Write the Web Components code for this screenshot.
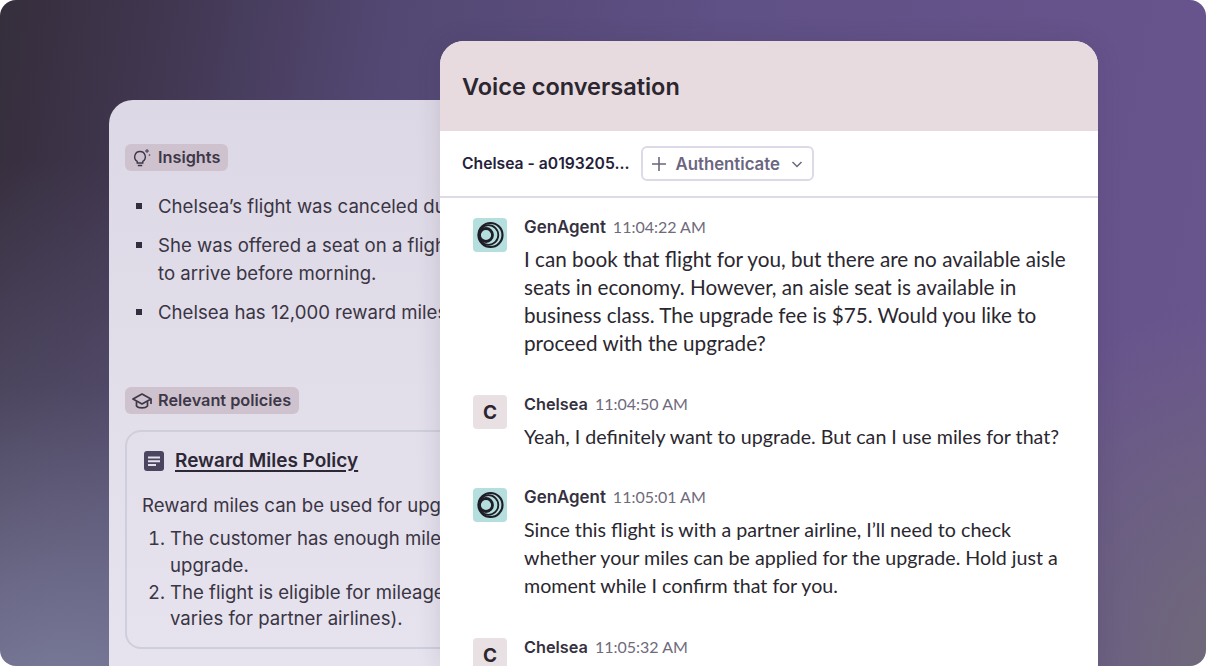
<!DOCTYPE html>
<html><head><meta charset="utf-8">
<style>
html,body{margin:0;padding:0;background:#fff;}
body{width:1206px;height:666px;overflow:hidden;font-family:Inter,sans-serif;}
</style></head><body>
<template id="t-stage"><style>
:host{display:grid;width:1206px;height:666px;overflow:hidden;border-radius:16px;
background:
 radial-gradient(300px 360px at 1240px 660px,rgba(112,108,118,.95),rgba(112,108,118,0) 100%),
 radial-gradient(680px 560px at 60px 720px,rgba(128,130,162,.95) 0%,rgba(118,118,150,.8) 25%,rgba(100,96,130,.42) 60%,rgba(90,85,115,0) 100%),
 linear-gradient(100deg,#352e3b 0%,#40364f 12%,#534873 30%,#5f5085 55%,#6a558f 100%);}
::slotted(*){grid-area:1/1;}
</style><slot></slot></template>

<template id="t-side"><style>
:host{display:block;margin:100px 0 0 109px;width:345px;height:620px;box-sizing:border-box;overflow:hidden;background:linear-gradient(#ddd8e5,#e7e4ef);border-radius:24px 0 0 0;padding:44px 0 0 16px;color:#3a3544;font:400 18.6px/28px Inter,sans-serif;}
</style><slot></slot></template>

<template id="t-tag"><style>
:host{display:flex;width:max-content;align-items:center;gap:6px;height:27px;padding:0 8px 0 6px;border-radius:6px;background:#cdc2ce;color:#3e3748;font:600 16.3px/27px Inter,sans-serif;}
svg{display:block;}
</style><slot name="icon"></slot><slot></slot></template>

<template id="t-bullets"><style>
:host{display:block;margin:21px 0 0;}
ul{list-style:none;margin:0;padding:0 0 0 33px;width:500px;}
</style><ul><slot></slot></ul></template>

<template id="t-bullet"><style>
:host{display:block;position:relative;margin-bottom:11px;white-space:nowrap;}
i{position:absolute;left:-22px;top:11px;width:6px;height:6px;background:#332e3d;}
</style><i></i><slot></slot></template>

<template id="t-policy"><style>
:host{display:block;width:500px;box-sizing:border-box;margin-top:16px;height:219px;border:2px solid #cfcedb;border-radius:16px;padding:15px 15px;font:400 18.6px/27px Inter,sans-serif;color:#3a3544;}
h3{display:flex;align-items:center;gap:10px;margin:0 0 18px 1px;font:600 19px/27px Inter,sans-serif;color:#2d2836;}
h3 span{text-decoration:underline;text-underline-offset:3px;text-decoration-thickness:1.5px;}
svg{display:block;}
p{margin:0 0 6px;white-space:nowrap;}
ol{margin:0;padding:0 0 0 28px;white-space:nowrap;line-height:26.800px;}
</style>
<h3><svg width="22" height="22" viewBox="0 0 22 22"><rect x="1" y="1" width="20" height="20" rx="3" fill="#4b4560"/><path d="M5 6.500h12v2H5zM5 10.200h12v2H5zM5 14h8v2H5z" fill="#e4e1ec"/></svg><span>Reward Miles Policy</span></h3>
<p>Reward miles can be used for upgrades if:</p>
<ol><li>The customer has enough miles for the<br>upgrade.</li><li>The flight is eligible for mileage upgrades (this<br>varies for partner airlines).</li></ol>
</template>

<template id="t-panel"><style>
:host{display:block;position:relative;z-index:1;margin:41px 0 0 440px;width:658px;height:625px;background:#fff;border-radius:24px 24px 0 0;overflow:hidden;box-shadow:0 0 24px rgba(50,40,70,.14);}
header{height:90px;background:#e7dbdf;display:flex;align-items:center;padding:2px 22px 0;box-sizing:border-box;}
h1{margin:0;font:600 23.500px/30px Inter,sans-serif;color:#2b2630;}
nav{height:67px;box-sizing:border-box;border-bottom:2px solid #dedbe6;display:flex;align-items:center;gap:12px;padding:0 22px;}
b{font:600 15.700px/20px Inter,sans-serif;color:#25213a;white-space:nowrap;}
button{display:flex;align-items:center;height:35px;box-sizing:border-box;width:173px;padding:0 8px 0 8px;background:#fff;border:2px solid #dcdae8;border-radius:6px;font:600 16.800px/20px Inter,sans-serif;color:#6b667f;}
button span{margin:0 10px 0 8px;}
.log{padding:20px 20px 0 33px;display:flex;flex-direction:column;gap:38px;}
</style>
<header><h1>Voice conversation</h1></header>
<nav><b>Chelsea - a0193205...</b><button><svg width="16" height="16" viewBox="0 0 16 16"><path d="M8 1v14M1 8h14" stroke="#6b667f" stroke-width="1.600" fill="none"/></svg><span>Authenticate</span><svg width="14" height="14" viewBox="0 0 14 14"><path d="M2.500 5l4.500 4.500L11.500 5" stroke="#6b667f" stroke-width="1.500" fill="none"/></svg></button></nav>
<div class="log"><slot></slot></div></template>

<template id="t-msg"><style>
:host{display:grid;grid-template-columns:34px 1fr;column-gap:17px;}
.av{width:34px;height:34px;border-radius:4px;display:flex;align-items:center;justify-content:center;background:#e9e0e4;font:700 19px/1 Inter,sans-serif;color:#2b2630;}
:host([bot]) .av{background:#b5dfdf;}
.hd{display:flex;align-items:baseline;gap:7px;height:18px;margin-bottom:9px;line-height:18px;}
.n{font:600 16.300px/18px Inter,sans-serif;color:#35313f;}
:host([bot]) .n{font-size:16.900px;}
.t{font:400 16px/18px Lato,sans-serif;color:#6f6a7c;}
.b{font:400 20.700px/28px Lato,sans-serif;color:#2a2730;}
:host([tight]) .b{font-size:19.650px;padding-top:1px;margin-bottom:-1px;}
:host([bot][tight]) .b{margin-bottom:0;}
svg{display:none;}
:host([bot]) svg{display:block;}
:host([bot]) .c{display:none;}
</style>
<div class="av"><svg width="34" height="34" viewBox="0 0 34 34" fill="none" stroke="#1f1d26"><circle cx="17.500" cy="17" r="12" stroke-width="2.200"/><circle cx="15.500" cy="17" r="9.800" stroke-width="1.800"/><circle cx="13" cy="17" r="6.500" stroke-width="2.800"/></svg><span class="c">C</span></div>
<div><div class="hd"><span class="n"><slot name="name"></slot></span><span class="t"><slot name="time"></slot></span></div><div class="b"><slot></slot></div></div>
</template>

<script>
function def(name,tpl){customElements.define(name,class extends HTMLElement{constructor(){super();this.attachShadow({mode:'open'}).appendChild(document.getElementById(tpl).content.cloneNode(true));}});}
def('ui-stage','t-stage');def('ui-side','t-side');def('ui-tag','t-tag');def('ui-bullets','t-bullets');def('ui-bullet','t-bullet');def('ui-policy','t-policy');def('ui-panel','t-panel');def('ui-msg','t-msg');
</script>

<ui-stage>
<ui-side>
<ui-tag><svg slot="icon" width="21" height="20" viewBox="0 0 21 20" fill="none" stroke="#3e3748" stroke-width="1.400"><path d="M9 3.500a5.300 5.300 0 0 0-2.800 9.800V15h5.600v-1.700a5.300 5.300 0 0 0-2.800-9.800zM6.800 17.500h4.400"/><path d="M16 1v4M14 3h4" stroke-width="1"/><circle cx="18.500" cy="7" r=".8" fill="#3e3748" stroke="none"/></svg>Insights</ui-tag>
<ui-bullets>
<ui-bullet>Chelsea’s flight was canceled due to weather.</ui-bullet>
<ui-bullet>She was offered a seat on a flight that is due<br>to arrive before morning.</ui-bullet>
<ui-bullet>Chelsea has 12,000 reward miles available.</ui-bullet>
</ui-bullets>
<div style="height:50px"></div>
<ui-tag><svg slot="icon" width="21" height="20" viewBox="0 0 21 20" fill="none" stroke="#3e3748" stroke-width="1.700" stroke-linejoin="round"><path d="M11 3L2 8l9 5 9-5z"/><path d="M5.500 10.500V15c2 2.500 9 2.500 11 0v-4.500M20 8v5"/></svg>Relevant policies</ui-tag>
<ui-policy></ui-policy>
</ui-side>
<ui-panel>
<ui-msg bot><span slot="name">GenAgent</span><span slot="time">11:04:22 AM</span>I can book that flight for you, but there are no available aisle seats in economy. However, an aisle seat is available in business class. The upgrade fee is $75. Would you like to proceed with the upgrade?</ui-msg>
<ui-msg tight><span slot="name">Chelsea</span><span slot="time">11:04:50 AM</span>Yeah, I definitely want to upgrade. But can I use miles for that?</ui-msg>
<ui-msg bot tight><span slot="name">GenAgent</span><span slot="time">11:05:01 AM</span>Since this flight is with a partner airline, I’ll need to check whether your miles can be applied for the upgrade. Hold just a moment while I confirm that for you.</ui-msg>
<ui-msg tight><span slot="name">Chelsea</span><span slot="time">11:05:32 AM</span>Okay, thanks.</ui-msg>
</ui-panel>
</ui-stage>
</body></html>
